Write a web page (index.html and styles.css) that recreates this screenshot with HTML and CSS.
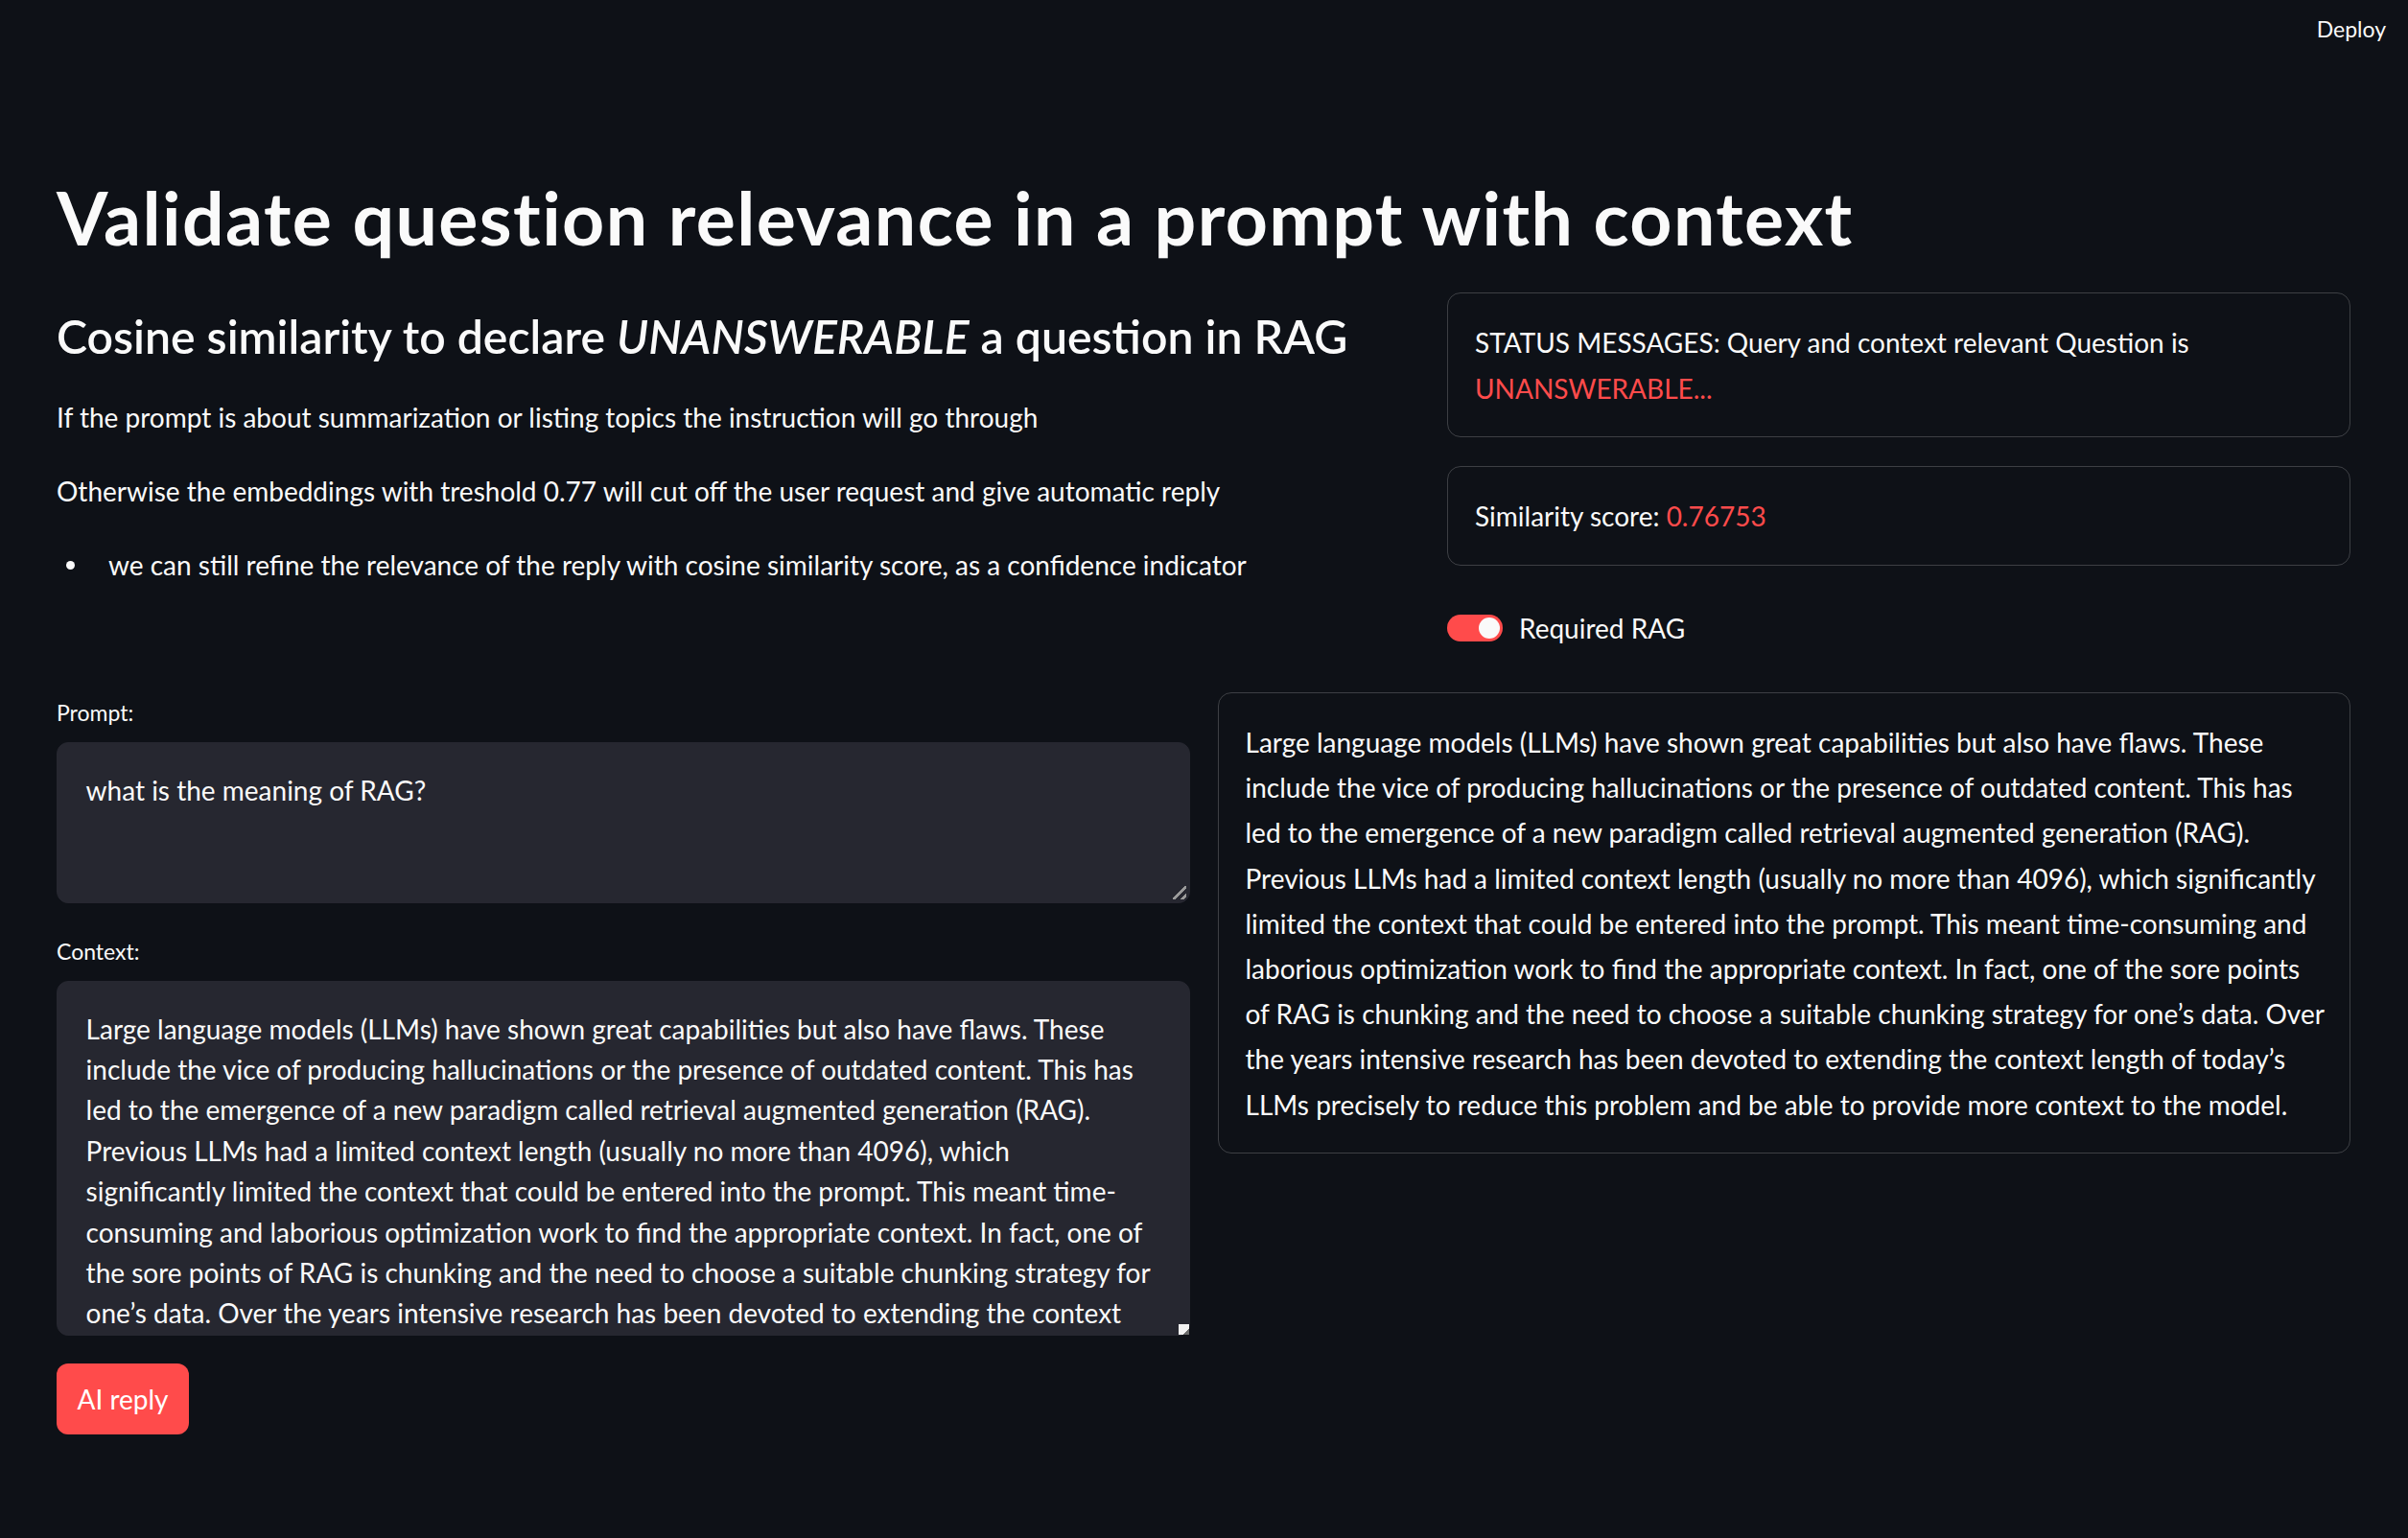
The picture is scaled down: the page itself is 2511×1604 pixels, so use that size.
FILE: index.html
```html
<!DOCTYPE html>
<html lang="en">
<head>
<meta charset="utf-8">
<title>Validate question relevance</title>
<link rel="stylesheet" href="styles.css">
</head>
<body>
<header class="topbar">
  <span class="deploy">Deploy</span>
</header>
<main class="main">
  <h1 class="title">Validate question relevance in a prompt with context</h1>

  <section class="row-top">
    <div class="intro">
      <h2 class="subtitle">Cosine similarity to declare <em>UNANSWERABLE</em> a question in RAG</h2>
      <p class="text">If the prompt is about summarization or listing topics the instruction will go through</p>
      <p class="text">Otherwise the embeddings with treshold 0.77 will cut off the user request and give automatic reply</p>
      <ul class="bullets">
        <li>we can still refine the relevance of the reply with cosine similarity score, as a confidence indicator</li>
      </ul>
    </div>
    <div class="status">
      <div class="card">
        <p class="card-text">STATUS MESSAGES: Query and context relevant Question is <span class="red">UNANSWERABLE...</span></p>
      </div>
      <div class="card">
        <p class="card-text">Similarity score: <span class="red">0.76753</span></p>
      </div>
      <div class="toggle">
        <span class="track"><span class="knob"></span></span>
        <span class="toggle-label">Required RAG</span>
      </div>
    </div>
  </section>

  <section class="row-bottom">
    <div class="form">
      <label class="field-label" for="prompt">Prompt:</label>
      <div class="field">
        <textarea id="prompt" class="area area-prompt">what is the meaning of RAG?</textarea>
        <span class="grip"></span>
      </div>
      <label class="field-label" for="context">Context:</label>
      <div class="field">
        <textarea id="context" class="area area-context">Large language models (LLMs) have shown great capabilities but also have flaws. These include the vice of producing hallucinations or the presence of outdated content. This has led to the emergence of a new paradigm called retrieval augmented generation (RAG). Previous LLMs had a limited context length (usually no more than 4096), which significantly limited the context that could be entered into the prompt. This meant time-consuming and laborious optimization work to find the appropriate context. In fact, one of the sore points of RAG is chunking and the need to choose a suitable chunking strategy for one’s data. Over the years intensive research has been devoted to extending the context length of today’s LLMs precisely to reduce this problem and be able to provide more context to the model.</textarea>
        <span class="corner"><span class="corner-grip"></span></span>
      </div>
      <button class="btn" type="button">AI reply</button>
    </div>
    <div class="answer-col">
      <div class="card answer">
        <p class="card-text">Large language models (LLMs) have shown great capabilities but also have flaws. These include the vice of producing hallucinations or the presence of outdated content. This has led to the emergence of a new paradigm called retrieval augmented generation (RAG). Previous LLMs had a limited context length (usually no more than 4096), which significantly limited the context that could be entered into the prompt. This meant time-consuming and laborious optimization work to find the appropriate context. In fact, one of the sore points of RAG is chunking and the need to choose a suitable chunking strategy for one’s data. Over the years intensive research has been devoted to extending the context length of today’s LLMs precisely to reduce this problem and be able to provide more context to the model.</p>
      </div>
    </div>
  </section>
</main>
</body>
</html>
```

FILE: styles.css
```css
* { box-sizing: border-box; }

html, body {
  margin: 0;
  padding: 0;
  background: #0e1117;
  color: #fafafa;
  font-family: "Lato", "Liberation Sans", sans-serif;
}

body {
  width: 2511px;
  min-height: 1604px;
}

.topbar {
  height: 62px;
  display: flex;
  align-items: center;
  justify-content: flex-end;
  padding-right: 23px;
}

.deploy {
  font-size: 23px;
  line-height: 1.2;
  color: #fafafa;
}

.main {
  padding: 120px 60px 0 59px;
}

.title {
  margin: -2px 0 0;
  font-size: 77px;
  font-weight: 700;
  line-height: 1.2;
  letter-spacing: 1.4px;
}

.row-top {
  margin-top: 33px;
  display: grid;
  grid-template-columns: 1fr 942px;
  column-gap: 29px;
  align-items: start;
}

.subtitle {
  margin: 16.5px 0 32px;
  font-size: 48.2px;
  font-weight: 600;
  line-height: 1.2;
}

.subtitle em {
  font-style: italic;
}

.text {
  margin: 0 0 29.6px;
  font-size: 28px;
  line-height: 47.4px;
}

.bullets {
  list-style: none;
  margin: 0;
  padding: 0;
}

.bullets li {
  display: flex;
  align-items: center;
  font-size: 28px;
  line-height: 47.4px;
}

.bullets li::before {
  content: "";
  flex: none;
  width: 9px;
  height: 9px;
  border-radius: 50%;
  background: #fafafa;
  margin: 0 35px 0 10px;
}

.status {
  display: flex;
  flex-direction: column;
  gap: 30px;
}

.card {
  border: 1px solid rgba(250, 250, 250, 0.2);
  border-radius: 14px;
  padding: 28px 28px 26px;
}

.card-text {
  margin: 0;
  font-size: 28px;
  line-height: 47.4px;
}

.red {
  color: #ff4b4b;
}

.toggle {
  margin-top: 12px;
  display: flex;
  align-items: center;
  gap: 17px;
  height: 47.4px;
}

.track {
  width: 58px;
  height: 28px;
  border-radius: 14px;
  background: #ff4b4b;
  display: flex;
  align-items: center;
  justify-content: flex-end;
  padding-right: 3px;
}

.knob {
  width: 22px;
  height: 22px;
  border-radius: 50%;
  background: #fafafa;
}

.toggle-label {
  font-size: 28px;
  line-height: 47.4px;
}

.row-bottom {
  margin-top: 43px;
  display: grid;
  grid-template-columns: 1fr 1fr;
  column-gap: 29px;
  align-items: start;
}

.field-label {
  display: block;
  height: 44.4px;
  margin-bottom: 7.4px;
  font-size: 23px;
  line-height: 42px;
}

.field {
  position: relative;
  margin-bottom: 29px;
}

.area {
  display: block;
  width: 100%;
  margin: 0;
  border: 1px solid #262730;
  border-radius: 12px;
  background: #262730;
  color: #fafafa;
  font-family: "Lato", "Liberation Sans", sans-serif;
  font-size: 28px;
  line-height: 42.4px;
  padding: 28px 38px 28px 29.6px;
  resize: none;
  outline: none;
  overflow: hidden;
  scrollbar-width: none;
}

.area-prompt {
  height: 168px;
}

.area-context {
  height: 370px;
}

.grip {
  position: absolute;
  right: 4px;
  bottom: 4px;
  width: 14px;
  height: 14px;
  background:
    linear-gradient(135deg, transparent 45%, #9a9a9a 45%, #9a9a9a 58%, transparent 58%),
    linear-gradient(135deg, transparent 78%, #9a9a9a 78%, #9a9a9a 92%, transparent 92%);
}

.corner {
  position: absolute;
  right: 1px;
  bottom: 1px;
  width: 11px;
  height: 11px;
  background: #f2f2f2;
  display: flex;
  align-items: flex-end;
  justify-content: flex-end;
}

.corner-grip {
  width: 7px;
  height: 7px;
  background: linear-gradient(135deg, transparent 50%, #6b6b6b 50%);
}

.btn {
  display: block;
  width: 138px;
  height: 74px;
  border: none;
  border-radius: 12px;
  background: #ff4b4b;
  color: #ffffff;
  font-family: "Lato", "Liberation Sans", sans-serif;
  font-size: 28px;
  padding: 0;
}

.answer {
  padding-right: 24px;
}

.answer .card-text {
  line-height: 47.2px;
}
```
